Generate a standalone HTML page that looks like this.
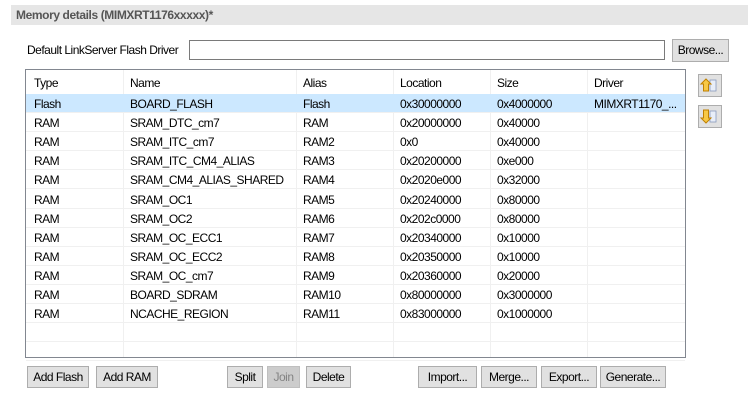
<!DOCTYPE html>
<html><head><style>
body{margin:0;width:748px;height:406px;background:#fff;font-family:"Liberation Sans",sans-serif;font-size:12px;color:#000;position:relative;overflow:hidden}
.a{position:absolute}
.hdr{left:11px;top:5px;width:737px;height:20px;background:#e6e6e6}
.hdr span{position:absolute;left:5px;top:3px;font-weight:bold;color:#555;font-size:12px;letter-spacing:-0.4px}
.btn{position:absolute;height:22px;background:#e1e1e1;border:1px solid #adadad;box-sizing:border-box;text-align:center;line-height:20px;font-size:12px;letter-spacing:-0.5px}
.tbl{left:25px;top:69px;width:661px;height:289px;border:1px solid #828790;box-sizing:border-box}
.row{position:absolute;left:0;width:659px;height:19px;border-bottom:1px solid #f0f0f0;box-sizing:border-box}
.row span{position:absolute;top:3px;white-space:nowrap;letter-spacing:-0.5px}
.vl{position:absolute;top:0;width:1px;height:287px;background:#f0f0f0}
</style></head><body>
<div class="a hdr"><span>Memory details (MIMXRT1176xxxxx)*</span></div>
<div class="a" style="left:27px;top:43px;letter-spacing:-0.5px">Default LinkServer Flash Driver</div>
<div class="a" style="left:189px;top:40px;width:476px;height:20px;border:1px solid #7a7a7a;box-sizing:border-box"></div>
<div class="btn" style="left:672px;top:39px;width:57px;height:23px;line-height:21px">Browse...</div>
<div class="a tbl">
<div class="vl" style="left:97px"></div><div class="vl" style="left:270px"></div><div class="vl" style="left:367px"></div><div class="vl" style="left:464px"></div><div class="vl" style="left:561px"></div>
<div id="rows"></div>
</div>
<div class="btn" style="left:698px;top:74px;width:24px;height:23px;background:#e1e1e1"><svg width="22" height="21" viewBox="0 0 22 21"><rect x="11" y="5" width="6" height="11" fill="#e8eef8" stroke="#8899bb" stroke-width=".8"/><path d="M7 4 L12 9 H9.5 V16 H4.5 V9 H2 Z" fill="#f7c845" stroke="#c08000" stroke-width="1"/></svg></div>
<div class="btn" style="left:698px;top:105px;width:24px;height:23px"><svg width="22" height="21" viewBox="0 0 22 21"><rect x="11" y="5" width="6" height="11" fill="#e8eef8" stroke="#8899bb" stroke-width=".8"/><path d="M7 17 L12 12 H9.5 V4 H4.5 V12 H2 Z" fill="#f7c845" stroke="#c08000" stroke-width="1"/></svg></div>
<div class="btn" style="left:27px;top:366px;width:62px">Add Flash</div>
<div class="btn" style="left:96px;top:366px;width:62px">Add RAM</div>
<div class="btn" style="left:227px;top:366px;width:36px">Split</div>
<div class="btn" style="left:267px;top:366px;width:33px;background:#cccccc;border-color:#bfbfbf;color:#838383">Join</div>
<div class="btn" style="left:306px;top:366px;width:45px">Delete</div>
<div class="btn" style="left:418px;top:366px;width:59px">Import...</div>
<div class="btn" style="left:481px;top:366px;width:56px">Merge...</div>
<div class="btn" style="left:541px;top:366px;width:56px">Export...</div>
<div class="btn" style="left:600px;top:366px;width:66px">Generate...</div>
<script>
var d=[["Type","Name","Alias","Location","Size","Driver"],
["Flash","BOARD_FLASH","Flash","0x30000000","0x4000000","MIMXRT1170_..."],
["RAM","SRAM_DTC_cm7","RAM","0x20000000","0x40000",""],
["RAM","SRAM_ITC_cm7","RAM2","0x0","0x40000",""],
["RAM","SRAM_ITC_CM4_ALIAS","RAM3","0x20200000","0xe000",""],
["RAM","SRAM_CM4_ALIAS_SHARED","RAM4","0x2020e000","0x32000",""],
["RAM","SRAM_OC1","RAM5","0x20240000","0x80000",""],
["RAM","SRAM_OC2","RAM6","0x202c0000","0x80000",""],
["RAM","SRAM_OC_ECC1","RAM7","0x20340000","0x10000",""],
["RAM","SRAM_OC_ECC2","RAM8","0x20350000","0x10000",""],
["RAM","SRAM_OC_cm7","RAM9","0x20360000","0x20000",""],
["RAM","BOARD_SDRAM","RAM10","0x80000000","0x3000000",""],
["RAM","NCACHE_REGION","RAM11","0x83000000","0x1000000",""],["","","","","",""],["","","","","",""]];
var xs=[8,104,277,374,471,568],h="";
d.forEach(function(r,i){var top=i==0?1:24+(i-1)*19.1;var hh=i==0?23:19;
h+='<div class="row" style="top:'+top+'px;height:'+hh+'px;'+(i==1?'background:#cce8ff;':'')+(i==0?'border-bottom:none;':'')+'">';
r.forEach(function(c,j){h+='<span style="left:'+xs[j]+'px;'+(i==0?'top:5px':'')+'">'+c+'</span>'});h+='</div>'});
document.getElementById('rows').innerHTML=h;
</script>
</body></html>
